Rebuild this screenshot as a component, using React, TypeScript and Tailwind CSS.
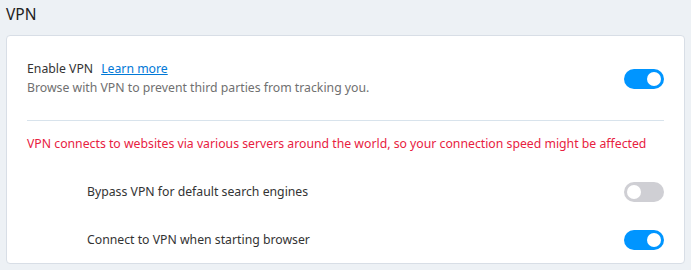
import React from "react";

function Toggle({ on }: { on: boolean }) {
  return (
    <div
      className={`flex h-5 w-10 shrink-0 items-center rounded-full px-[3px] ${
        on ? "justify-end bg-[#0095ff]" : "justify-start bg-[#cfcfd4]"
      }`}
    >
      <div className="h-[14px] w-[14px] rounded-full bg-white" />
    </div>
  );
}

export default function App() {
  const [vpn, setVpn] = React.useState(true);

  return (
    <div
      className="h-[270px] w-[691px] bg-[#edf1f5] px-[6px] pt-[3px] text-[12.25px] text-[#333]"
      style={{ fontFamily: '"Noto Sans", "Open Sans", sans-serif' }}
    >
      <h2 className="h-[32px] text-[15.5px] leading-[22px] text-[#222]">VPN</h2>
      <div className="rounded-[4px] border border-[#d8dee6] bg-white px-5">
        <div className="flex items-center justify-between pt-[24px] pb-[22px]">
          <div>
            <div className="leading-[18px]">
              Enable VPN
              <a className="ml-2 cursor-pointer text-[#0078d7] underline">Learn more</a>
            </div>
            <div className="leading-[20px] text-[#707070]">
              Browse with VPN to prevent third parties from tracking you.
            </div>
          </div>
          <button onClick={() => setVpn(!vpn)}>
            <Toggle on={vpn} />
          </button>
        </div>
        <div className="border-t border-[#d8e3ec]" />
        <div className="pt-[13px] pb-[14px] leading-[20px] text-[#e8213f]">
          VPN connects to websites via various servers around the world, so your connection speed might be affected
        </div>
        <div className="flex h-[48px] items-center justify-between pl-[60px]">
          <span>Bypass VPN for default search engines</span>
          <Toggle on={false} />
        </div>
        <div className="flex h-[47px] items-center justify-between pl-[60px] pt-[1px]">
          <span>Connect to VPN when starting browser</span>
          <Toggle on={true} />
        </div>
      </div>
    </div>
  );
}
